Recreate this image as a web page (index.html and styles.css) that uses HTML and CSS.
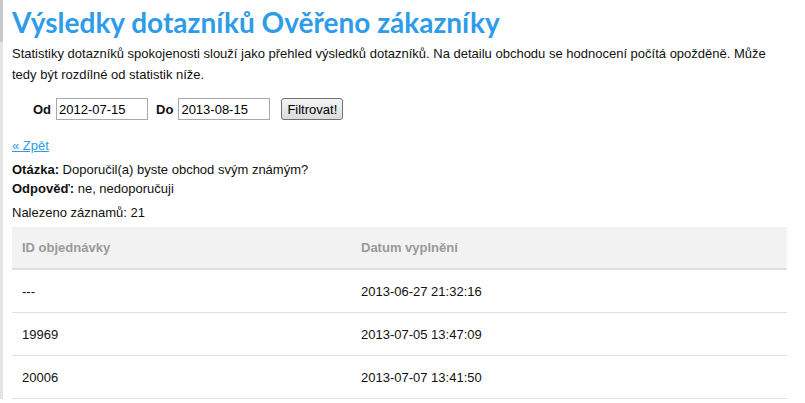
FILE: index.html
```html
<!DOCTYPE html>
<html>
<head>
  <meta charset="utf-8">
  <title>Výsledky dotazníků</title>
  <link rel="stylesheet" href="styles.css">
</head>
<body>
  <div class="edge"></div>
  <main class="content">
    <h1>Výsledky dotazníků Ověřeno zákazníky</h1>
    <p class="intro">Statistiky dotazníků spokojenosti slouží jako přehled výsledků dotazníků. Na detailu obchodu se hodnocení počítá opožděně. Může tedy být rozdílné od statistik níže.</p>

    <form class="filter">
      <label>Od</label>
      <input type="text" value="2012-07-15">
      <label>Do</label>
      <input type="text" value="2013-08-15">
      <button type="button">Filtrovat!</button>
    </form>

    <a class="back" href="#">« Zpět</a>
    <p class="line first"><b>Otázka:</b> Doporučil(a) byste obchod svým známým?</p>
    <p class="line"><b>Odpověď:</b> ne, nedoporučuji</p>
    <p class="found">Nalezeno záznamů: 21</p>

    <table class="results">
      <thead>
        <tr><th>ID objednávky</th><th>Datum vyplnění</th></tr>
      </thead>
      <tbody>
        <tr><td>---</td><td>2013-06-27 21:32:16</td></tr>
        <tr><td>19969</td><td>2013-07-05 13:47:09</td></tr>
        <tr><td>20006</td><td>2013-07-07 13:41:50</td></tr>
      </tbody>
    </table>
  </main>
</body>
</html>
```

FILE: styles.css
```css
body {
  margin: 0;
  padding: 0;
  background: #fff;
  color: #111;
  font-family: "Liberation Sans", Arial, sans-serif;
  font-size: 13px;
  display: flex;
}
/* bit of the frame showing at the left */
.edge {
  width: 3px;
  flex-shrink: 0;
  background: #e4e4e4;
  border-top: 42px solid #c8c8c8;
}
.content {
  flex: 1;
  padding: 0 18px 0 9px;
}
h1 {
  margin: 5px 0 0 0;
  color: #2e9ce9;
  font-family: Lato, "DejaVu Sans", sans-serif;
  font-size: 28px;
  font-weight: bold;
  line-height: 34px;
}
.intro {
  margin: 4px 0 0 0;
  line-height: 21px;
}
.filter {
  display: flex;
  align-items: center;
  margin: 12px 0 0 21px;
  height: 24px;
}
.filter label {
  font-weight: bold;
  margin-right: 5px;
}
.filter input {
  width: 86px;
  height: 18px;
  padding: 1px 2px;
  margin: 0 8px 0 0;
  border: 1px solid #a9a9a9;
  font-family: "Liberation Sans", Arial, sans-serif;
  font-size: 13px;
  color: #000;
}
.filter button {
  margin-left: 3px;
  height: 22px;
  padding: 0 5px;
  border: 1px solid #707070;
  border-radius: 3px;
  background: linear-gradient(#f4f4f4, #dcdcdc);
  font-family: "Liberation Sans", Arial, sans-serif;
  font-size: 13px;
  color: #000;
}
.back {
  display: block;
  margin-top: 16px;
  color: #2e9ce9;
  line-height: 17px;
}
.line {
  margin: 1px 0 0 0;
  line-height: 18px;
}
.line.first {
  margin-top: 7px;
}
.found {
  margin: 6px 0 0 0;
  line-height: 18px;
}
.results {
  width: 100%;
  margin-top: 5px;
  border-collapse: collapse;
}
.results th {
  background: #f2f2f2;
  color: #999;
  font-weight: bold;
  text-align: left;
  height: 41px;
  padding: 0 10px;
  border-bottom: 2px solid #e0e0e0;
}
.results td {
  height: 42px;
  padding: 0 10px;
  border-bottom: 1px solid #e0e0e0;
}
.results th:first-child,
.results td:first-child {
  width: 319px;
}
```
